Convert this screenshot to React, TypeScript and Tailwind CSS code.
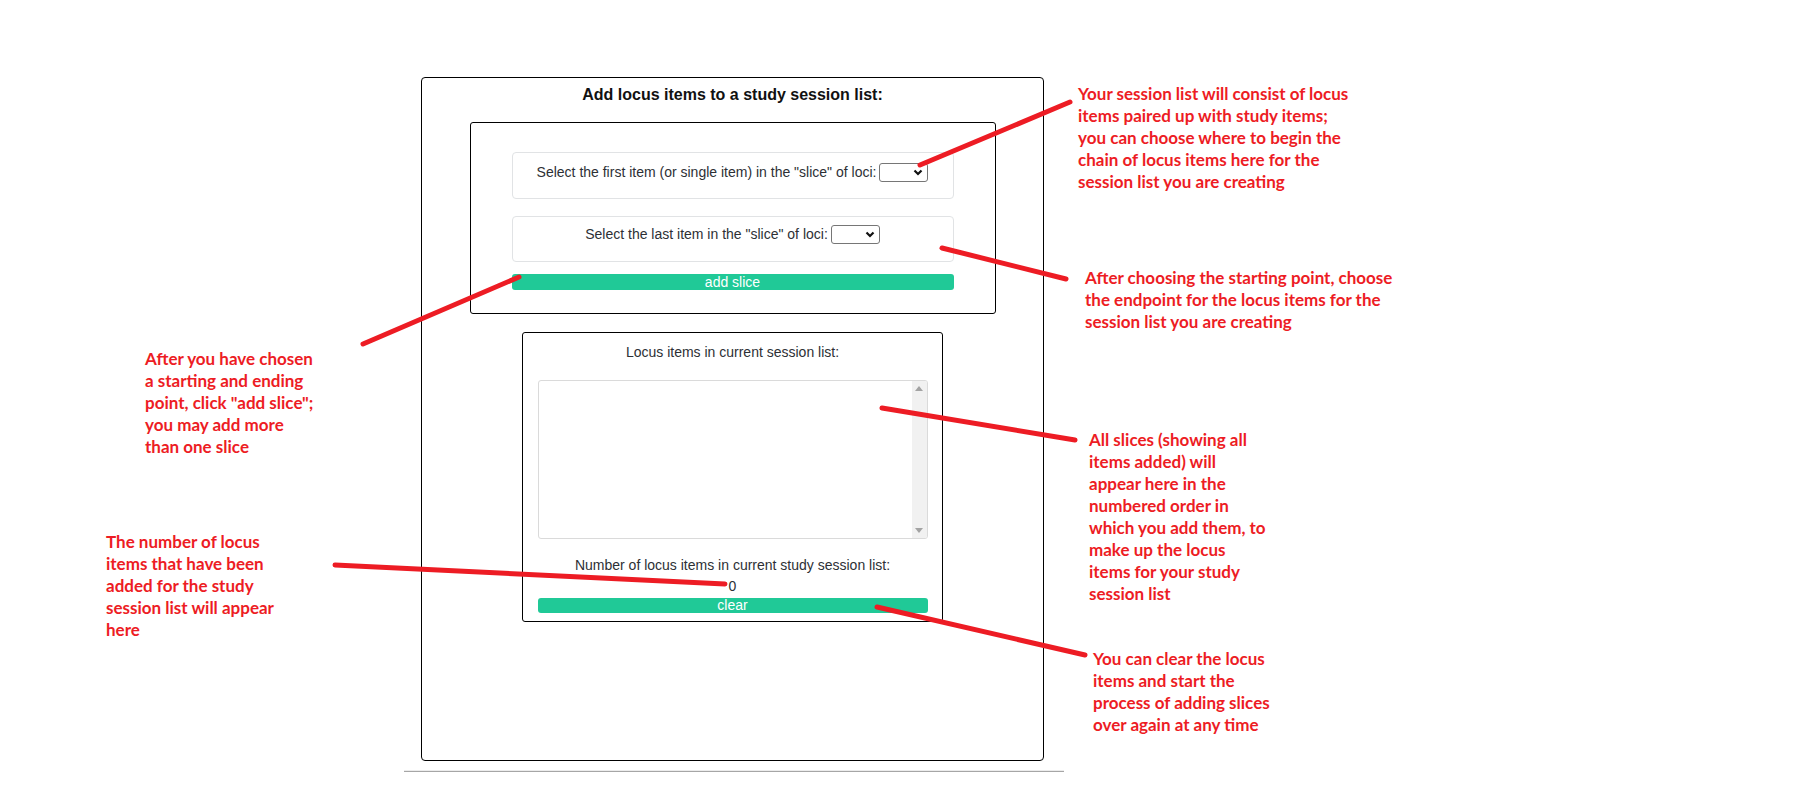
import React from "react";

function FakeSelect() {
  return (
    <div className="relative w-[49px] h-[19px] border border-[#767676] rounded-[3px] bg-white ml-[3px]">
      <svg className="absolute right-[4px] top-[5px]" width="10" height="7" viewBox="0 0 10 7">
        <path d="M1.5 1.5 L5 5 L8.5 1.5" stroke="#111" strokeWidth="2.2" fill="none" />
      </svg>
    </div>
  );
}

const redText = "absolute font-['Lato',sans-serif] font-bold text-[17px] leading-[22px] text-[#ed1c24] whitespace-pre";

export default function App() {
  return (
    <div className="relative w-[1800px] h-[812px] bg-white overflow-hidden font-['Liberation_Sans',Arial,sans-serif] text-[#2d3035]">
      <div className="pt-[77px] pl-[404px]">
        <div className="w-[660px]">
          <div className="ml-[17px] w-[623px] h-[684px] border border-black rounded-[4px] pt-[7px]">
            <h2 className="text-center text-[16px] leading-[19px] font-bold text-[#111]">
              Add locus items to a study session list:
            </h2>
            <div className="mt-[18px] mx-auto w-[526px] border border-black rounded-[3px] pt-[29px] pb-[23px]">
              <div className="mx-auto w-[442px] h-[47px] border border-[#e1e3e5] rounded-[4px] pt-[9px]">
                <div className="flex items-center justify-center h-[20px] text-[14px]">
                  <span>Select the first item (or single item) in the "slice" of loci:</span>
                  <FakeSelect />
                </div>
              </div>
              <div className="mt-[17px] mx-auto w-[442px] h-[46px] border border-[#e1e3e5] rounded-[4px] pt-[7px]">
                <div className="flex items-center justify-center h-[20px] text-[14px]">
                  <span>Select the last item in the "slice" of loci:</span>
                  <FakeSelect />
                </div>
              </div>
              <div className="mt-[12px] mx-auto w-[442px] h-[16px] bg-[#20c997] rounded-[3px] text-white text-[14px] leading-[16px] text-center">
                add slice
              </div>
            </div>
            <div className="mt-[18px] mx-auto w-[421px] border border-black rounded-[3px] pt-[11px] pb-[8px]">
              <div className="text-center text-[14px] leading-[16px]">Locus items in current session list:</div>
              <div className="mt-[20px] mx-auto w-[390px] h-[159px] border border-[#dadada] rounded-[3px] flex justify-end overflow-hidden">
                <div className="w-[15px] h-full bg-[#f1f1f1] flex flex-col justify-between items-center py-[5px]">
                  <svg width="8" height="5" viewBox="0 0 8 5"><path d="M0 5 L4 0 L8 5 Z" fill="#a3a3a3" /></svg>
                  <svg width="8" height="5" viewBox="0 0 8 5"><path d="M0 0 L4 5 L8 0 Z" fill="#a3a3a3" /></svg>
                </div>
              </div>
              <div className="mt-[16px] text-center text-[14px] leading-[21px]">Number of locus items in current study session list:</div>
              <div className="text-center text-[14px] leading-[21px]">0</div>
              <div className="mt-[1px] mx-auto w-[390px] h-[15px] bg-[#20c997] rounded-[3px] text-white text-[14px] leading-[15px] text-center">
                clear
              </div>
            </div>
          </div>
          <div className="mt-[9px] h-[2px] border-t border-t-[#ececec] border-b border-b-[#a6a6a6]" />
        </div>
      </div>

      <div className={redText + " left-[1078px] top-[83px]"}>
        {"Your session list will consist of locus\nitems paired up with study items;\nyou can choose where to begin the\nchain of locus items here for the\nsession list you are creating"}
      </div>
      <div className={redText + " left-[1085px] top-[267px]"}>
        {"After choosing the starting point, choose\nthe endpoint for the locus items for the\nsession list you are creating"}
      </div>
      <div className={redText + " left-[145px] top-[348px]"}>
        {"After you have chosen\na starting and ending\npoint, click \"add slice\";\nyou may add more\nthan one slice"}
      </div>
      <div className={redText + " left-[106px] top-[531px]"}>
        {"The number of locus\nitems that have been\nadded for the study\nsession list will appear\nhere"}
      </div>
      <div className={redText + " left-[1089px] top-[429px]"}>
        {"All slices (showing all\nitems added) will\nappear here in the\nnumbered order in\nwhich you add them, to\nmake up the locus\nitems for your study\nsession list"}
      </div>
      <div className={redText + " left-[1093px] top-[648px]"}>
        {"You can clear the locus\nitems and start the\nprocess of adding slices\nover again at any time"}
      </div>

      <svg className="absolute left-0 top-0 pointer-events-none" width="1800" height="812" viewBox="0 0 1800 812">
        <g stroke="#ed1c24" strokeWidth="5" strokeLinecap="round" fill="none">
          <line x1="920" y1="165" x2="1070" y2="102" />
          <line x1="942" y1="248" x2="1066" y2="279" />
          <line x1="519" y1="277" x2="363" y2="344" />
          <line x1="882" y1="408" x2="1075" y2="440" />
          <line x1="335" y1="565" x2="725" y2="584" />
          <line x1="877" y1="607" x2="1085" y2="655" />
        </g>
      </svg>
    </div>
  );
}
